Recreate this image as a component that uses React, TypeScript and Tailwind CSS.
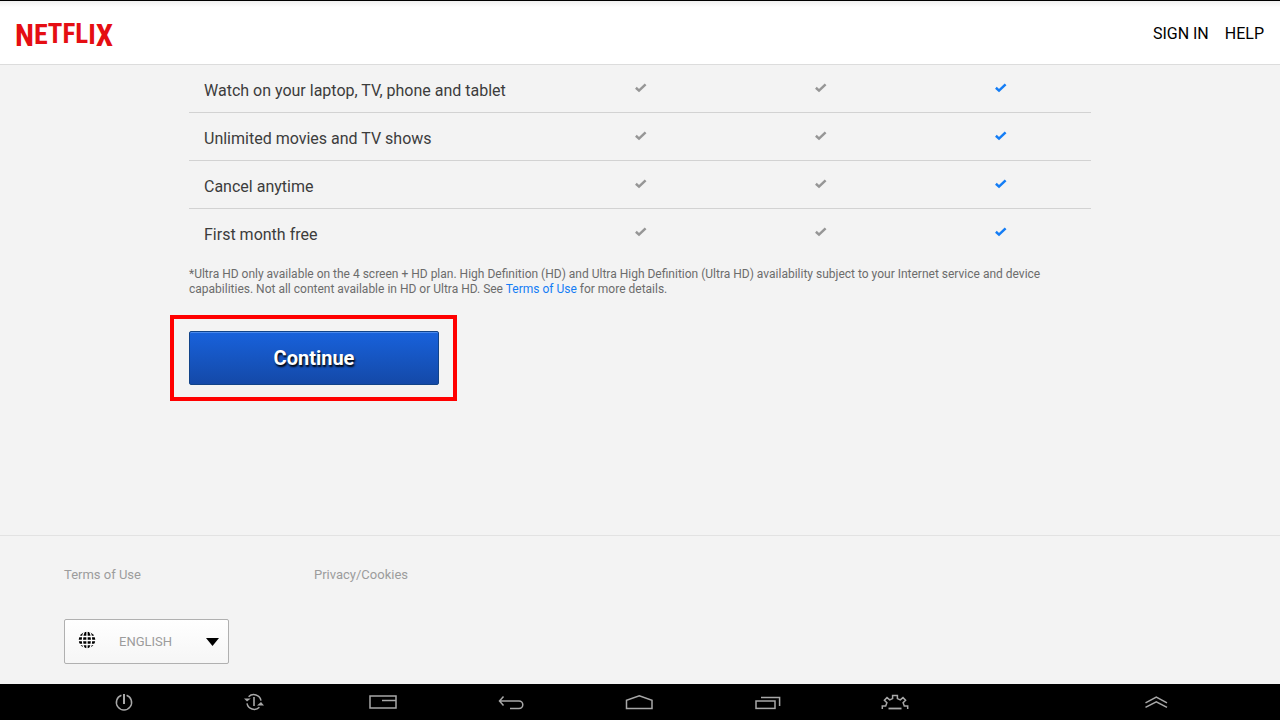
import type { ReactNode } from 'react';

const features = [
  'Watch on your laptop, TV, phone and tablet',
  'Unlimited movies and TV shows',
  'Cancel anytime',
  'First month free',
];

const plans = ['Basic', 'Standard', 'Premium'];

function Check({ active }: { active: boolean }) {
  return (
    <svg
      role="img"
      aria-label="Included"
      width="12"
      height="10"
      viewBox="0 0 12 10"
      className={active ? 'mx-auto text-[#147df5]' : 'mx-auto text-[#969696]'}
    >
      <path d="M0.9 4.8 L4 7.6 L10.6 1.4" fill="none" stroke="currentColor" strokeWidth="2.5" />
    </svg>
  );
}

// Outer letters are larger so the word's lower edge bows upward in the middle
function Logo() {
  return (
    <svg width="104" height="40" viewBox="0 0 104 40" aria-label="Netflix">
      <text
        x="-1"
        y="32"
        className="fill-[#e50e13] font-['Roboto_Condensed','Liberation_Sans_Narrow','Roboto',sans-serif] text-[28px] font-bold"
      >
        <tspan className="text-[31px]">N</tspan>
        <tspan y="30" className="text-[28px]">E</tspan>
        <tspan y="29" className="text-[27px]">TFL</tspan>
        <tspan y="30" className="text-[28px]">I</tspan>
        <tspan y="32" className="text-[31px]">X</tspan>
      </text>
    </svg>
  );
}

function NavIcon({ children }: { children: ReactNode }) {
  return (
    <svg width="32" height="20" viewBox="-2 0 32 20" fill="none" stroke="#a8a8a8" strokeWidth="1.5" aria-hidden="true">
      {children}
    </svg>
  );
}

const navItems = [
  {
    label: 'Power',
    icon: (
      <>
        <path d="M11.4 3.2 A7.6 7.6 0 1 0 16.6 3.2" />
        <path d="M14 2 V12" strokeWidth="2" />
      </>
    ),
  },
  {
    label: 'Restart',
    icon: (
      <>
        <path d="M9.6 4.8 A7.3 7.3 0 0 1 22 8.6" />
        <path d="M20.4 15.2 A7.3 7.3 0 0 1 8 11.4" />
        <path d="M15 5 V14" strokeWidth="1.6" />
        <path d="M5 6.4 H11.8 L8 9.6 Z" fill="#a8a8a8" stroke="none" />
        <path d="M25 13.4 H18 L22 10 Z" fill="#a8a8a8" stroke="none" />
      </>
    ),
  },
  {
    label: 'Screen',
    icon: (
      <>
        <rect x="3" y="4" width="26" height="12" />
        <path d="M15 8.5 H29" />
      </>
    ),
  },
  {
    label: 'Back',
    icon: <path d="M7.5 4.5 L3.5 9 L7.5 13.5 M3.5 9 H23 A3.8 3.8 0 0 1 23 16.6 H14" />,
  },
  {
    label: 'Home',
    icon: <path d="M1.5 16.5 V8.3 L14.3 3.8 L27 8.3 V16.5 Z" />,
  },
  {
    label: 'Recent apps',
    icon: (
      <>
        <rect x="3" y="9" width="19" height="7.4" />
        <path d="M8 5.5 H26.6 V14" />
      </>
    ),
  },
  {
    label: 'Settings',
    icon: (
      <>
        <path d="M0.3 17 V14 H3.7 L4.9 10.7 L2.4 8.2 L5 5.6 L7.7 7.9 L10.6 6.6 V3.4 H15.4 V6.6 L18.3 7.9 L21 5.6 L23.6 8.2 L21.1 10.7 L22.3 14 H25.7 V17" />
        <path d="M6.5 16.5 H19.5" strokeWidth="1.8" />
      </>
    ),
  },
];

export default function App() {
  return (
    <div className="flex min-h-screen flex-col bg-[#f3f3f3] font-['Roboto',sans-serif]">
      <header className="flex h-[65px] items-center justify-between border-t border-b border-t-black border-b-[#dcdcdc] bg-linear-to-b from-[#f0f0f0] to-white to-10% px-4 pt-0.5">
        <a href="#home">
          <Logo />
        </a>
        <nav className="flex gap-4 text-base text-black">
          <a href="#sign-in">SIGN IN</a>
          <a href="#help">HELP</a>
        </nav>
      </header>

      <main className="mx-auto w-full max-w-[902px] flex-1">
        <table className="w-full table-fixed border-separate border-spacing-0 text-base text-[#3c3c3c]">
          <colgroup>
            <col />
            <col className="w-[180px]" />
            <col className="w-[180px]" />
            <col className="w-[180px]" />
          </colgroup>
          <tbody>
            {features.map((feature) => (
              <tr key={feature} className="group h-12">
                <th
                  scope="row"
                  className="border-b border-[#d2d2d2] pt-1 pl-[15px] text-left font-normal group-last:border-transparent"
                >
                  {feature}
                </th>
                {plans.map((plan) => (
                  <td key={plan} className="border-b border-[#d2d2d2] pb-0.5 group-last:border-transparent">
                    <Check active={plan === 'Premium'} />
                  </td>
                ))}
              </tr>
            ))}
          </tbody>
        </table>

        <p className="mt-2.5 text-xs leading-[15px] text-[#6c6c6c]">
          *Ultra HD only available on the 4 screen + HD plan. High Definition (HD) and Ultra High Definition (Ultra HD)
          availability subject to your Internet service and device capabilities. Not all content available in HD or
          Ultra HD. See{' '}
          <a href="#terms" className="text-[#147df5]">
            Terms of Use
          </a>{' '}
          for more details.
        </p>

        <div className="relative mt-[34px] w-[250px]">
          <button
            type="button"
            className="h-[54px] w-full rounded-xs border border-[#124388] bg-linear-to-b from-[#1862dc] to-[#1449a8] text-xl font-bold text-white shadow-[inset_0_1px_0_#4c8aec] [text-shadow:1px_2px_2px_#000000]"
          >
            Continue
          </button>
          <div className="pointer-events-none absolute -inset-y-4 -right-[18px] -left-[19px] border-4 border-[#ff0000]" />
        </div>
      </main>

      <footer className="border-t border-[#e2e2e2] px-16 pt-[29px] pb-5 text-[13px] text-[#9c9c9c]">
        <div className="flex leading-5">
          <a href="#terms" className="w-[250px]">
            Terms of Use
          </a>
          <a href="#privacy">Privacy/Cookies</a>
        </div>
        <div className="relative mt-[34px] w-[165px]">
          <svg
            className="pointer-events-none absolute top-3 left-[14px]"
            width="18"
            height="18"
            viewBox="0 0 18 18"
            aria-hidden="true"
          >
            <circle cx="9" cy="9" r="8.3" fill="#000" />
            <g fill="none" stroke="#fff" strokeWidth="1.3">
              <path d="M9 0 V18 M0 9.5 H18 M1 5.5 H17 M1 13.5 H17" />
              <path d="M6.5 0 C3.7 5 3.7 13 6.5 18 M11.5 0 C14.3 5 14.3 13 11.5 18" />
            </g>
          </svg>
          <select
            aria-label="Language"
            className="block h-[45px] w-full appearance-none rounded-xs border border-[#b0b0b0] bg-linear-to-b from-white to-[#f6f6f6] pl-[54px] text-[13px] text-[#9c9c9c]"
          >
            <option>ENGLISH</option>
          </select>
          <svg
            className="pointer-events-none absolute top-[19px] right-[10px]"
            width="13"
            height="8"
            viewBox="0 0 13 8"
            aria-hidden="true"
          >
            <path d="M0 0 H13 L6.5 8 Z" fill="#000" />
          </svg>
        </div>
      </footer>

      <nav className="flex h-9 bg-black pl-[60px]">
        <div className="mr-[72px] flex flex-1">
          {navItems.map(({ label, icon }) => (
            <button key={label} type="button" aria-label={label} className="flex flex-1 items-center justify-center">
              <NavIcon>{icon}</NavIcon>
            </button>
          ))}
        </div>
        <button type="button" aria-label="Expand" className="flex w-[248px] items-center justify-center">
          <NavIcon>
            <path d="M3.5 10.8 L14.3 5.2 L25 10.8 M3.5 15.4 L14.3 9.8 L25 15.4" />
          </NavIcon>
        </button>
      </nav>
    </div>
  );
}
